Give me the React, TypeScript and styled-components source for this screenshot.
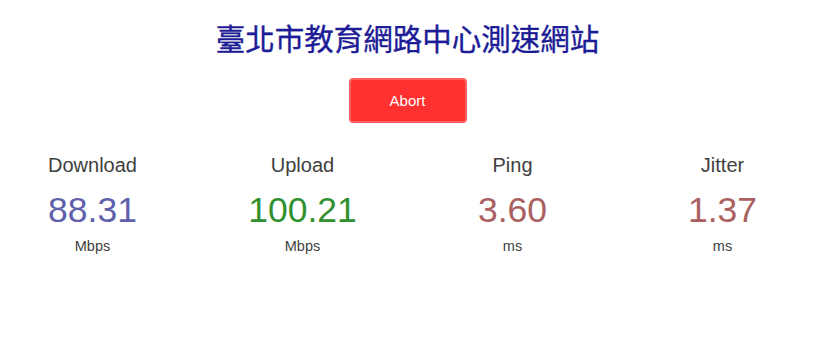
import styled, { createGlobalStyle } from 'styled-components';

const GlobalStyle = createGlobalStyle`
  html, body {
    margin: 0;
    padding: 0;
    background: #ffffff;
  }
  body {
    font-family: "Liberation Sans", Arial, "Noto Sans CJK TC", sans-serif;
    overflow: hidden;
  }
`;

/* leaves room for the scrollbar gutter the original page had */
const Page = styled.main`
  margin-right: 15px;
  display: flex;
  flex-direction: column;
  align-items: center;
  text-align: center;
  padding-top: 20px;
`;

const Title = styled.h1`
  margin: 0;
  font-family: "Liberation Sans", "Noto Sans CJK TC", sans-serif;
  font-size: 29.5px;
  line-height: 40px;
  font-weight: 400;
  color: #1c1c96;
  -webkit-text-stroke: 0.35px #1c1c96;
`;

const AbortButton = styled.button`
  margin-top: 18px;
  box-sizing: border-box;
  width: 118px;
  height: 45px;
  border: 2px solid #ff6060;
  border-radius: 4px;
  background-color: #ff3030;
  color: #ffffff;
  font-family: "Liberation Sans", Arial, sans-serif;
  font-size: 15px;
  cursor: pointer;
`;

const TestRow = styled.div`
  margin-top: 29px;
  width: 100%;
  display: flex;
  justify-content: center;
`;

const TestArea = styled.div`
  flex: 0 0 210px;
  height: 135px;
  display: flex;
  flex-direction: column;
  align-items: center;
`;

const TestName = styled.div`
  margin-top: 1px;
  font-size: 20px;
  line-height: 24px;
  color: #404040;
`;

const MeterText = styled.div<{ $color: string }>`
  margin-top: 12px;
  font-size: 35.5px;
  line-height: 43px;
  color: ${({ $color }) => $color};
`;

const Unit = styled.div`
  margin-top: 6px;
  font-size: 14.5px;
  line-height: 17px;
  color: #404040;
`;

const tests = [
  { name: 'Download', value: '88.31', unit: 'Mbps', color: '#6060aa' },
  { name: 'Upload', value: '100.21', unit: 'Mbps', color: '#309030' },
  { name: 'Ping', value: '3.60', unit: 'ms', color: '#aa6060' },
  { name: 'Jitter', value: '1.37', unit: 'ms', color: '#aa6060' },
];

export default function App() {
  return (
    <>
      <GlobalStyle />
      <Page>
        <Title>臺北市教育網路中心測速網站</Title>
        <AbortButton type="button">Abort</AbortButton>
        <TestRow>
          {tests.map((t) => (
            <TestArea key={t.name}>
              <TestName>{t.name}</TestName>
              <MeterText $color={t.color}>{t.value}</MeterText>
              <Unit>{t.unit}</Unit>
            </TestArea>
          ))}
        </TestRow>
      </Page>
    </>
  );
}
